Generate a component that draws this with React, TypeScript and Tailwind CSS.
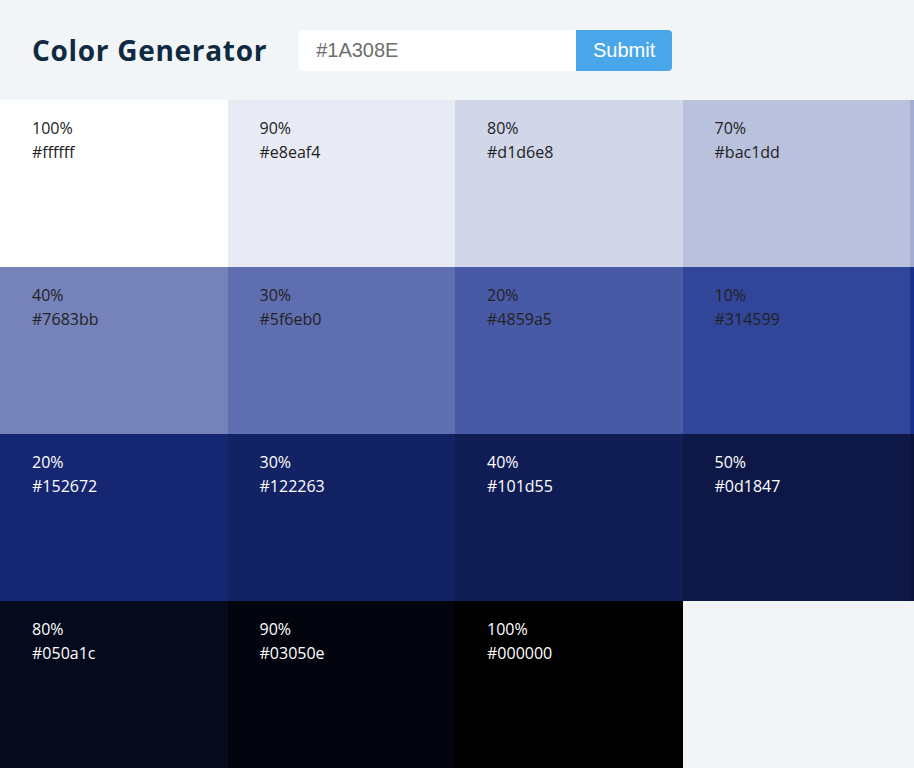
import React from "react";

type Cell = { pct: number; hex: string; light: boolean };

const cells: Cell[] = [
  { pct: 100, hex: "#ffffff", light: false },
  { pct: 90, hex: "#e8eaf4", light: false },
  { pct: 80, hex: "#d1d6e8", light: false },
  { pct: 70, hex: "#bac1dd", light: false },
  { pct: 60, hex: "#a3acd2", light: false },
  { pct: 50, hex: "#8d98c7", light: false },
  { pct: 40, hex: "#7683bb", light: false },
  { pct: 30, hex: "#5f6eb0", light: false },
  { pct: 20, hex: "#4859a5", light: false },
  { pct: 10, hex: "#314599", light: false },
  { pct: 0, hex: "#1a308e", light: false },
  { pct: 10, hex: "#172b80", light: true },
  { pct: 20, hex: "#152672", light: true },
  { pct: 30, hex: "#122263", light: true },
  { pct: 40, hex: "#101d55", light: true },
  { pct: 50, hex: "#0d1847", light: true },
  { pct: 60, hex: "#0a1339", light: true },
  { pct: 70, hex: "#080e2b", light: true },
  { pct: 80, hex: "#050a1c", light: true },
  { pct: 90, hex: "#03050e", light: true },
  { pct: 100, hex: "#000000", light: true },
];

export default function App() {
  return (
    <div className="w-[914px] h-[768px] overflow-hidden bg-[#f1f5f8]">
      <section className="h-[100px] flex items-center pl-8">
        <h3
          className="mr-8 text-[28px] font-bold tracking-[0.7px] text-[#102a42] leading-none"
          style={{ fontFamily: '"Open Sans", sans-serif' }}
        >
          Color Generator
        </h3>
        <form className="flex" onSubmit={(e) => e.preventDefault()}>
          <input
            defaultValue="#1A308E"
            className="w-[277px] h-[41px] bg-white px-4 text-[20px] text-[#6e6e6e] rounded-l-[4px] border border-transparent outline-none"
            style={{ fontFamily: '"Liberation Sans", Arial, sans-serif' }}
          />
          <button
            type="submit"
            className="w-[96px] h-[41px] bg-[#49a6e9] text-white text-[20px] rounded-r-[4px]"
            style={{ fontFamily: '"Liberation Sans", Arial, sans-serif' }}
          >
            Submit
          </button>
        </form>
      </section>
      <section
        className="w-[1365px] grid grid-cols-6 auto-rows-[167px]"
        style={{ fontFamily: '"Open Sans", sans-serif' }}
      >
        {cells.map((c, i) => (
          <article
            key={i}
            className={`py-4 px-8 text-[16px] leading-6 ${c.light ? "text-white" : "text-[#222222]"}`}
            style={{ backgroundColor: c.hex }}
          >
            {i % 6 < 4 && (
              <>
                <p className="m-0">{c.pct}%</p>
                <p className="m-0">{c.hex}</p>
              </>
            )}
          </article>
        ))}
      </section>
    </div>
  );
}
